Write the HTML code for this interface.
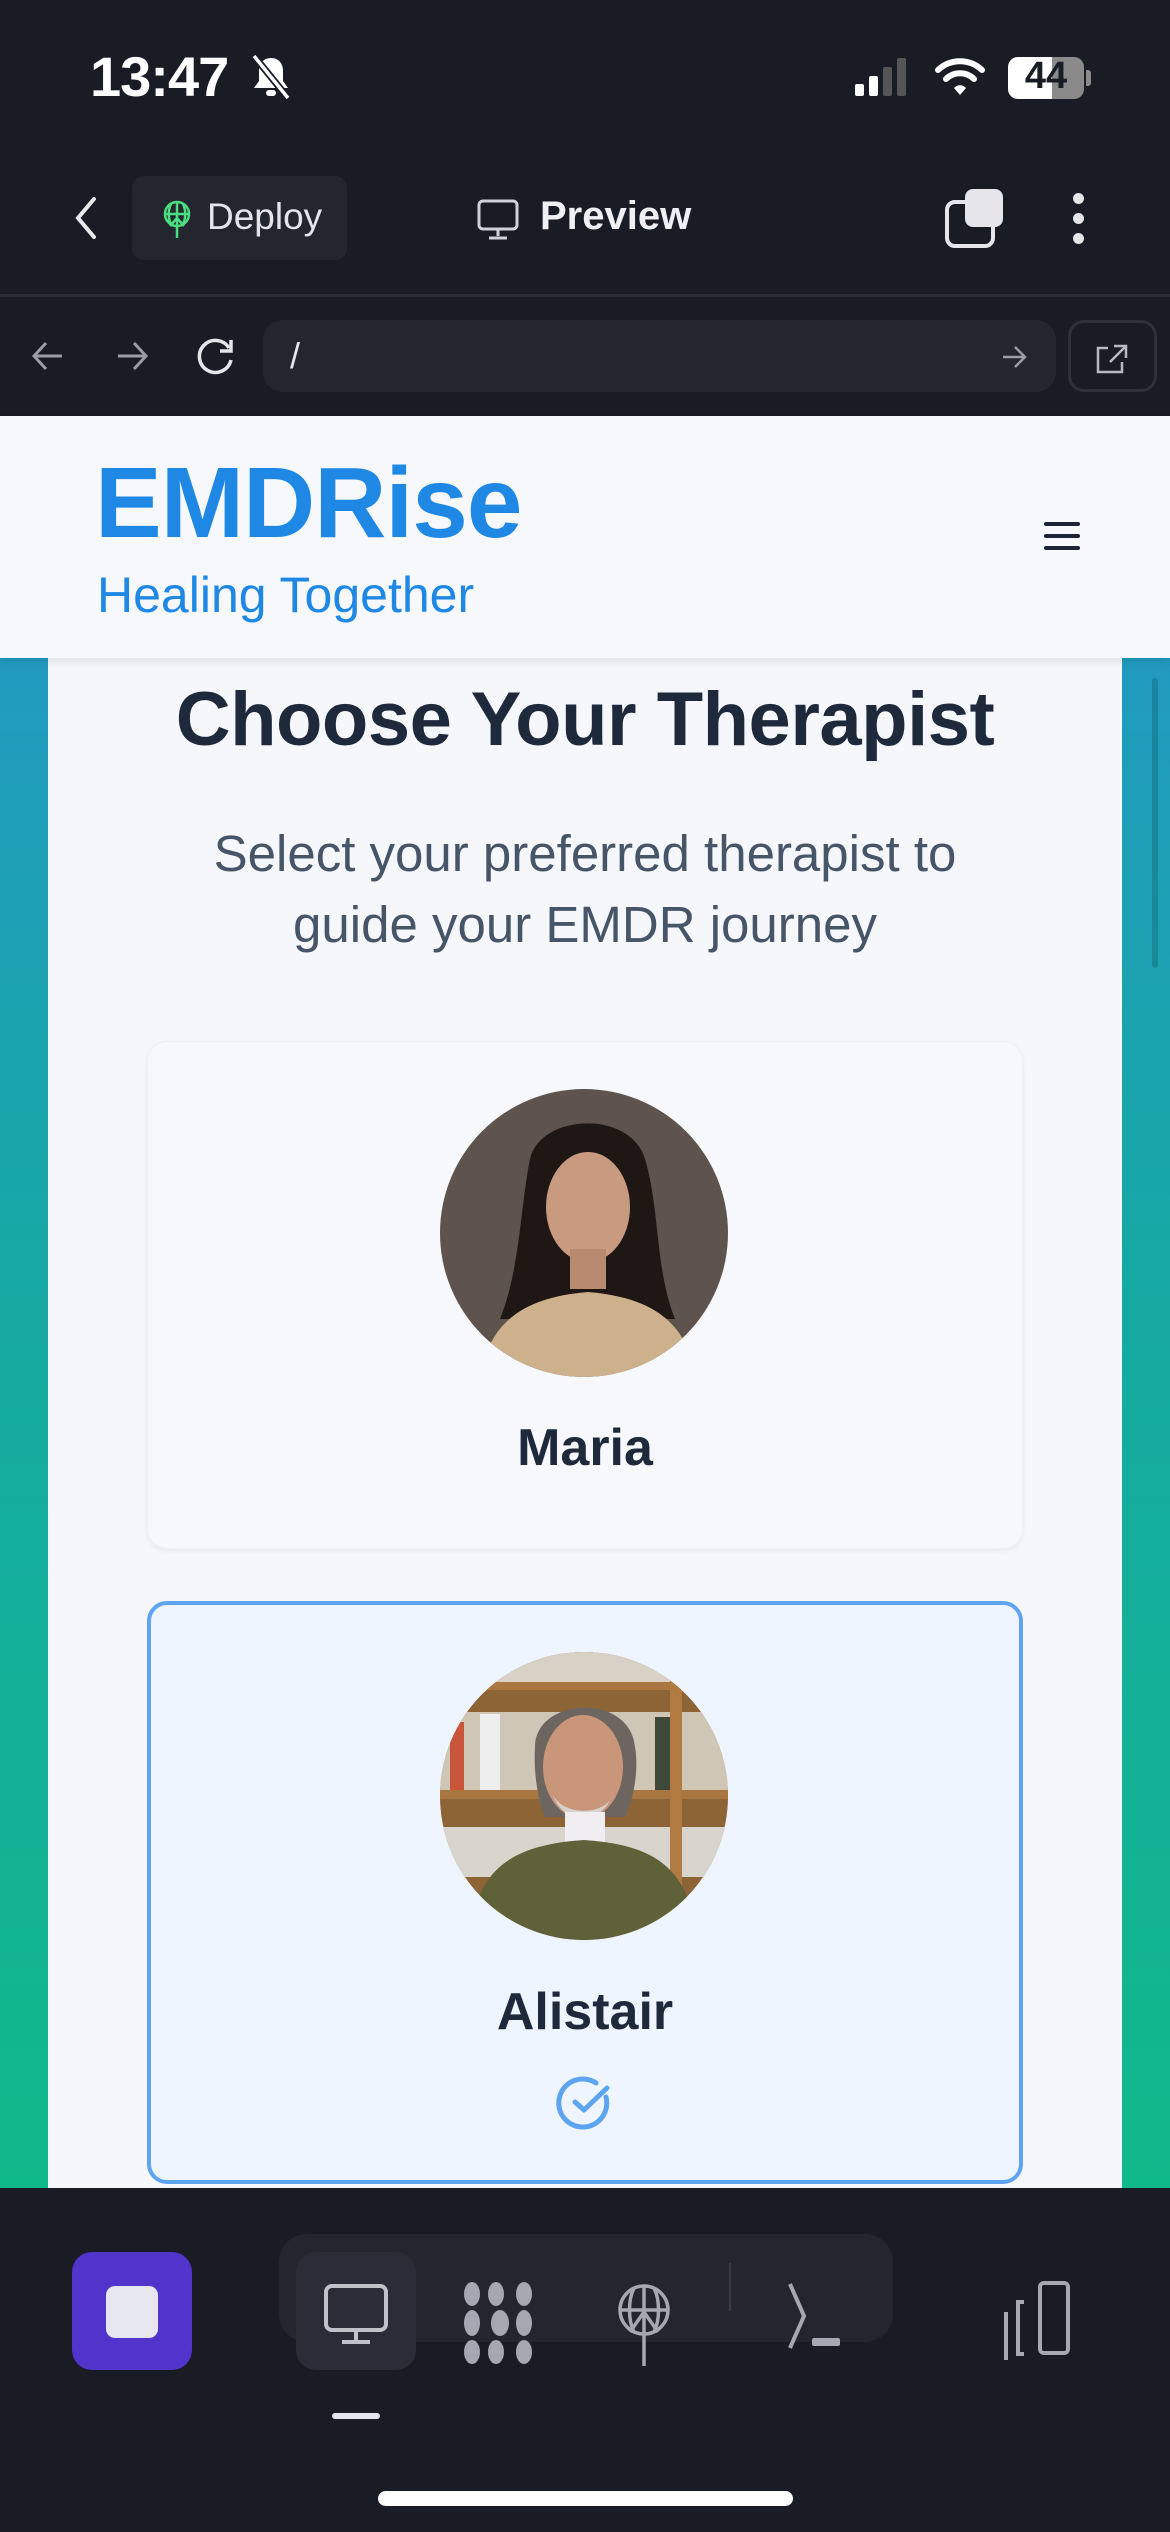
<!DOCTYPE html>
<html><head><meta charset="utf-8"><style>
*{margin:0;padding:0;box-sizing:border-box}
body{width:1170px;height:2532px;background:#1a1c25;font-family:"Liberation Sans",sans-serif;position:relative;overflow:hidden}
.a{position:absolute}
.c{text-align:center;left:0;right:0}
</style></head><body>
<!-- status bar -->
<div class="a" style="left:90px;top:44px;color:#fff;font-size:56px;font-weight:bold;letter-spacing:-1px">13:47</div>
<svg class="a" style="left:248px;top:52px" width="46" height="50" viewBox="0 0 46 50"><path d="M23 6c-8 0-12 6-12 13v10l-5 7h34l-5-7V19c0-7-4-13-12-13z" fill="#fff"/><rect x="18" y="38" width="10" height="6" rx="3" fill="#fff"/><path d="M6 4l34 42" stroke="#1a1c25" stroke-width="7"/><path d="M6 4l34 42" stroke="#fff" stroke-width="3.5"/></svg>
<svg class="a" style="left:855px;top:58px" width="60" height="40"><rect x="0" y="26" width="9" height="12" rx="2" fill="#fff"/><rect x="14" y="18" width="9" height="20" rx="2" fill="#fff"/><rect x="28" y="9" width="9" height="29" rx="2" fill="#555"/><rect x="42" y="0" width="9" height="38" rx="2" fill="#555"/></svg>
<svg class="a" style="left:935px;top:56px" width="50" height="42" viewBox="0 0 50 42"><path d="M3 14a32 32 0 0 1 44 0" stroke="#fff" stroke-width="6" fill="none" stroke-linecap="round"/><path d="M11 23a20 20 0 0 1 28 0" stroke="#fff" stroke-width="6" fill="none" stroke-linecap="round"/><path d="M19 32a8 8 0 0 1 12 0l-6 7z" fill="#fff"/></svg>
<div class="a" style="left:1008px;top:57px;width:76px;height:42px;border-radius:10px;background:linear-gradient(90deg,#fff 0 58%,#8a8a8a 58%);"></div>
<div class="a" style="left:1010px;top:55px;width:72px;font-size:38px;font-weight:bold;color:#1a1c25;text-align:center">44</div>
<div class="a" style="left:1086px;top:70px;width:5px;height:16px;border-radius:0 3px 3px 0;background:#8a8a8a"></div>
<!-- toolbar -->
<svg class="a" style="left:70px;top:195px" width="30" height="46"><path d="M24 4L8 23l16 19" stroke="#e8e8ec" stroke-width="4" fill="none" stroke-linecap="round"/></svg>
<div class="a" style="left:132px;top:176px;width:215px;height:84px;border-radius:12px;background:#23262f"></div>
<svg class="a" style="left:160px;top:200px" width="34" height="40" viewBox="0 0 34 40"><circle cx="17" cy="14" r="12" stroke="#4ade80" stroke-width="2.5" fill="none"/><path d="M5 14h24M17 2v36M11 4c-3 6-3 14 0 20M23 4c3 6 3 14 0 20M10 26l7-8 7 8" stroke="#4ade80" stroke-width="2.5" fill="none"/></svg>
<div class="a" style="left:207px;top:196px;font-size:37px;color:#e4e4ea">Deploy</div>
<svg class="a" style="left:476px;top:198px" width="44" height="44" viewBox="0 0 44 44"><rect x="3" y="3" width="38" height="28" rx="4" stroke="#d0d0d8" stroke-width="3" fill="none"/><path d="M22 31v7M13 40h18" stroke="#d0d0d8" stroke-width="3"/></svg>
<div class="a" style="left:540px;top:194px;font-size:40px;color:#f0f0f4;font-weight:bold">Preview</div>
<div class="a" style="left:945px;top:200px;width:50px;height:48px;border:4px solid #e6e6ea;border-radius:10px"></div>
<div class="a" style="left:965px;top:189px;width:38px;height:38px;background:#e6e6ea;border-radius:8px"></div>
<div class="a" style="left:1073px;top:193px;width:11px;height:11px;border-radius:50%;background:#e6e6ea"></div>
<div class="a" style="left:1073px;top:213px;width:11px;height:11px;border-radius:50%;background:#e6e6ea"></div>
<div class="a" style="left:1073px;top:233px;width:11px;height:11px;border-radius:50%;background:#e6e6ea"></div>
<div class="a" style="left:0;top:294px;width:1170px;height:3px;background:#2a2d37"></div>
<!-- url bar -->
<svg class="a" style="left:28px;top:338px" width="40" height="36"><path d="M34 18H6M18 5L6 18l12 13" stroke="#9a9ca6" stroke-width="3" fill="none"/></svg>
<svg class="a" style="left:112px;top:338px" width="40" height="36"><path d="M6 18h28M22 5l12 13-12 13" stroke="#9a9ca6" stroke-width="3" fill="none"/></svg>
<svg class="a" style="left:193px;top:334px" width="46" height="46" viewBox="0 0 46 46"><path d="M36 14A16 16 0 1 0 38 26" stroke="#e6e6ea" stroke-width="3.5" fill="none"/><path d="M38 6v11H27" stroke="#e6e6ea" stroke-width="3.5" fill="none"/></svg>
<div class="a" style="left:263px;top:320px;width:793px;height:72px;border-radius:20px;background:#23262f"></div>
<div class="a" style="left:290px;top:335px;font-size:36px;color:#e4e4ea">/</div>
<svg class="a" style="left:1000px;top:342px" width="30" height="30"><path d="M3 15h22M15 5l10 10-10 10" stroke="#9a9ca6" stroke-width="2.5" fill="none"/></svg>
<div class="a" style="left:1068px;top:320px;width:89px;height:72px;border-radius:16px;border:3px solid #2e313b"></div>
<svg class="a" style="left:1094px;top:342px" width="36" height="34"><path d="M14 6H4v24h24V20M20 4h12v12M32 4L16 20" stroke="#b8bac2" stroke-width="2.5" fill="none"/></svg>
<!-- web page -->
<div class="a" style="left:0;top:416px;width:1170px;height:1772px;background:linear-gradient(180deg,#2594c9 0%,#16aaa3 50%,#10b98a 100%)"></div>
<div class="a" style="left:48px;top:640px;width:1074px;height:1548px;background:#f5f7fb"></div>
<div class="a" style="left:0;top:416px;width:1170px;height:242px;background:#f6f8fc;box-shadow:0 4px 8px rgba(0,0,0,.08)"></div>
<div class="a" style="left:95px;top:446px;font-size:100px;font-weight:bold;color:#1f88e5;letter-spacing:-1px">EMDRise</div>
<div class="a" style="left:97px;top:566px;font-size:50px;color:#1f88e5">Healing Together</div>
<div class="a" style="left:1044px;top:522px;width:36px;height:4px;background:#1e2536;border-radius:2px"></div>
<div class="a" style="left:1044px;top:534px;width:36px;height:4px;background:#1e2536;border-radius:2px"></div>
<div class="a" style="left:1044px;top:546px;width:36px;height:4px;background:#1e2536;border-radius:2px"></div>
<div class="a" style="left:1152px;top:678px;width:6px;height:290px;border-radius:3px;background:rgba(0,0,0,.15)"></div>
<div class="a c" style="top:676px;font-size:76px;font-weight:bold;color:#1e293b;letter-spacing:-0.5px">Choose Your Therapist</div>
<div class="a c" style="top:818px;font-size:51px;line-height:71px;color:#475569">Select your preferred therapist to<br>guide your EMDR journey</div>
<!-- card 1 -->
<div class="a" style="left:147px;top:1041px;width:876px;height:508px;border-radius:20px;background:#f7f8fb;box-shadow:0 2px 6px rgba(0,0,0,.06);border:1px solid #eef0f4"></div>
<svg class="a" style="left:440px;top:1089px" width="288" height="288" viewBox="0 0 288 288"><defs><clipPath id="c1"><circle cx="144" cy="144" r="144"/></clipPath></defs><g clip-path="url(#c1)"><rect width="288" height="288" fill="#5e544d"/><path d="M90 70c10-45 100-50 115 0 15 50 10 110 30 160H60c20-50 20-110 30-160z" fill="#1e1714"/><ellipse cx="148" cy="118" rx="42" ry="55" fill="#c89a80"/><rect x="130" y="160" width="36" height="40" fill="#b88a70"/><path d="M40 288c10-60 50-80 108-85 58 5 98 25 108 85z" fill="#cdb18d"/><path d="M100 60c20-30 80-30 95 5-20-10-70-12-95-5z" fill="#1e1714"/></g></svg>
<div class="a c" style="top:1418px;font-size:52px;font-weight:bold;color:#1e293b">Maria</div>
<!-- card 2 -->
<div class="a" style="left:147px;top:1601px;width:876px;height:583px;border-radius:20px;background:#eef5ff;border:4px solid #5ea4f0"></div>
<svg class="a" style="left:440px;top:1652px" width="288" height="288" viewBox="0 0 288 288"><defs><clipPath id="c2"><circle cx="144" cy="144" r="144"/></clipPath></defs><g clip-path="url(#c2)"><rect width="288" height="288" fill="#8c6436"/><rect y="0" width="288" height="30" fill="#d8d2c6"/><rect y="30" width="288" height="8" fill="#a8763e"/><rect y="60" width="288" height="80" fill="#cfc6b6"/><rect x="10" y="70" width="14" height="70" fill="#c9553a"/><rect x="40" y="62" width="20" height="78" fill="#eee"/><rect x="215" y="65" width="25" height="75" fill="#3d4a3a"/><rect y="138" width="288" height="9" fill="#a8763e"/><rect y="175" width="288" height="50" fill="#d9d4cc"/><rect x="230" y="0" width="12" height="288" fill="#b07a40"/><path d="M95 95c0-50 95-55 100 0 5 30-5 60-10 70H105c-5-10-12-40-10-70z" fill="#6d6660"/><ellipse cx="143" cy="115" rx="40" ry="52" fill="#c9967a"/><path d="M112 140c10 35 50 35 62 0-5 25-55 25-62 0z" fill="#d8d2cc"/><rect x="125" y="160" width="40" height="30" fill="#f0eef0"/><path d="M30 288c5-70 40-95 114-100 74 5 105 30 114 100z" fill="#5f6138"/></g></svg>
<div class="a c" style="top:1982px;font-size:52px;font-weight:bold;color:#1e293b">Alistair</div>
<svg class="a" style="left:556px;top:2075px" width="58" height="58" viewBox="0 0 58 58"><path d="M50 22A24 24 0 1 1 40 8" stroke="#5ea4f0" stroke-width="5" fill="none" stroke-linecap="round"/><path d="M19 27l9 8 23-22" stroke="#5ea4f0" stroke-width="5" fill="none" stroke-linecap="round" stroke-linejoin="round"/></svg>
<!-- bottom bar -->
<div class="a" style="left:0;top:2188px;width:1170px;height:344px;background:#1a1c25"></div>
<div class="a" style="left:72px;top:2252px;width:120px;height:118px;border-radius:20px;background:#5034cb"></div>
<div class="a" style="left:106px;top:2286px;width:52px;height:52px;border-radius:9px;background:#e6e6ee"></div>
<div class="a" style="left:279px;top:2234px;width:614px;height:108px;border-radius:28px;background:#23262f"></div>
<div class="a" style="left:296px;top:2252px;width:120px;height:118px;border-radius:20px;background:#2a2d38"></div>
<svg class="a" style="left:322px;top:2282px" width="68" height="64" viewBox="0 0 68 64"><rect x="4" y="4" width="60" height="44" rx="6" stroke="#c0c2ca" stroke-width="4" fill="none"/><path d="M34 48v10M20 60h28" stroke="#c0c2ca" stroke-width="4"/></svg>
<svg class="a" style="left:462px;top:2282px" width="76" height="82" viewBox="0 0 76 82"><g fill="#a3a8b2"><ellipse cx="10" cy="12" rx="8" ry="12"/><ellipse cx="34" cy="12" rx="8" ry="12"/><ellipse cx="62" cy="12" rx="8" ry="12"/><ellipse cx="10" cy="41" rx="8" ry="13"/><ellipse cx="38" cy="41" rx="9" ry="13"/><ellipse cx="62" cy="41" rx="8" ry="13"/><ellipse cx="10" cy="70" rx="8" ry="12"/><ellipse cx="34" cy="70" rx="8" ry="12"/><ellipse cx="62" cy="70" rx="8" ry="12"/></g></svg>
<svg class="a" style="left:612px;top:2282px" width="64" height="86" viewBox="0 0 64 86"><circle cx="32" cy="28" r="24" stroke="#a3a8b2" stroke-width="3.5" fill="none"/><path d="M8 28h48M32 4v80M22 6c-6 12-6 32 0 44M42 6c6 12 6 32 0 44M18 50l14-20 14 20" stroke="#a3a8b2" stroke-width="3.5" fill="none"/></svg>
<div class="a" style="left:729px;top:2263px;width:2px;height:48px;background:#3a3d48"></div>
<svg class="a" style="left:786px;top:2280px" width="60" height="70"><path d="M4 4l14 32-14 32" stroke="#a3a8b2" stroke-width="4" fill="none"/><rect x="26" y="58" width="28" height="8" rx="2" fill="#a3a8b2"/></svg>
<svg class="a" style="left:1000px;top:2280px" width="76" height="80"><path d="M6 32v50" stroke="#a3a8b2" stroke-width="4"/><path d="M24 22h-6v52h6" stroke="#a3a8b2" stroke-width="4" fill="none"/><rect x="40" y="3" width="28" height="70" rx="4" stroke="#a3a8b2" stroke-width="4" fill="none"/></svg>
<div class="a" style="left:332px;top:2413px;width:48px;height:6px;border-radius:3px;background:#e6e6ee"></div>
<div class="a" style="left:378px;top:2491px;width:415px;height:15px;border-radius:8px;background:#fff"></div>
</body></html>
